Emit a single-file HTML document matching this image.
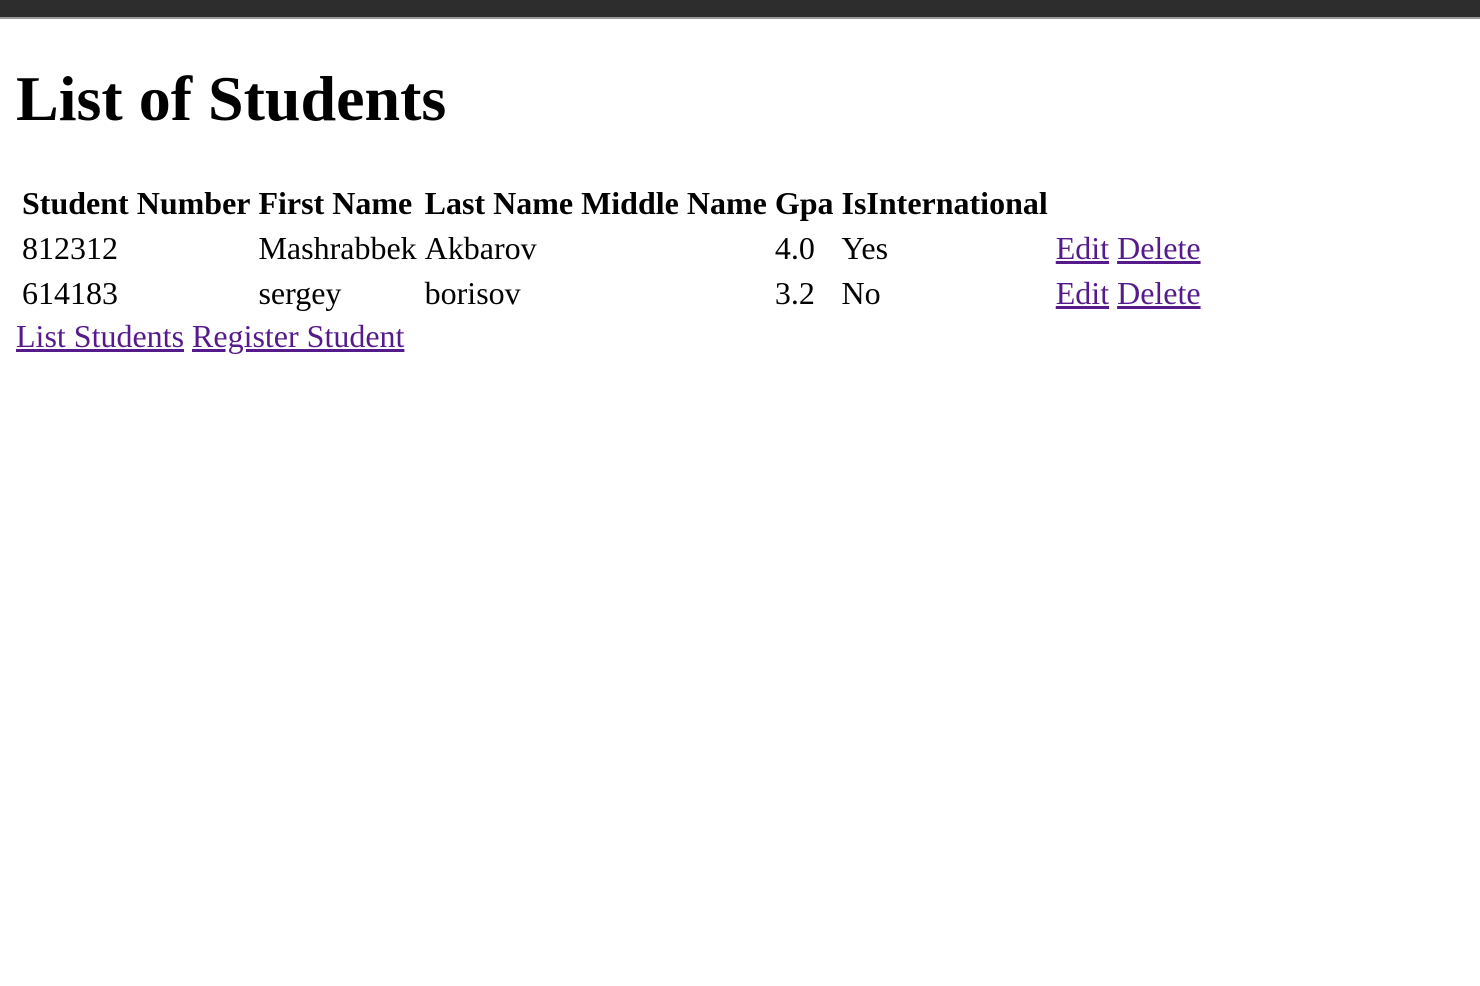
<!DOCTYPE html>
<html><head><meta charset="utf-8">
<style>
html,body{margin:0;padding:0;background:#fff;}
.bar{height:19px;background:#2d2d2d;border-bottom:2px solid #9a9a9a;box-sizing:border-box;}
.wrap{zoom:2;font-family:"Liberation Serif",serif;font-size:16px;color:#000;padding:9px 8px 8px 8px;}
h1{font-size:32px;margin:0.67em 0 0.67em 0;font-weight:bold;}
.wrap>h1{margin-top:calc(0.67em - 9px);}
table{border-spacing:2px;}
th,td{padding:1px;text-align:left;}
a{color:#551a8b;}
</style></head>
<body>
<div class="bar"></div>
<div class="wrap">
<h1>List of Students</h1>
<table>
<tr><th>Student Number</th><th>First Name</th><th>Last Name</th><th>Middle Name</th><th>Gpa</th><th>IsInternational</th><th></th></tr>
<tr><td>812312</td><td>Mashrabbek</td><td>Akbarov</td><td></td><td>4.0</td><td>Yes</td><td><a href="#">Edit</a> <a href="#">Delete</a></td></tr>
<tr><td>614183</td><td>sergey</td><td>borisov</td><td></td><td>3.2</td><td>No</td><td><a href="#">Edit</a> <a href="#">Delete</a></td></tr>
</table>
<a href="#">List Students</a> <a href="#">Register Student</a>
</div>
</body></html>
